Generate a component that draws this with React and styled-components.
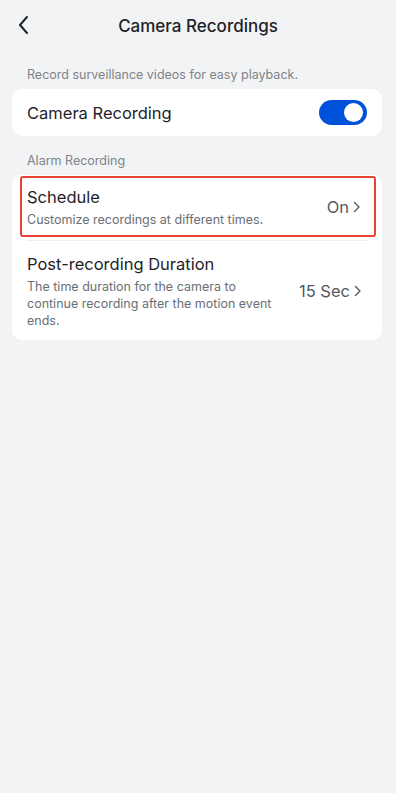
import React, { useState } from 'react'
import styled, { createGlobalStyle } from 'styled-components'

const Global = createGlobalStyle`
  html, body {
    margin: 0;
    padding: 0;
    background: #f2f3f5;
  }
  body {
    font-family: Inter, 'Noto Sans', sans-serif;
    color: #1f2329;
  }
`

const Page = styled.div`
  min-height: 793px;
  background: #f2f3f5;
`

const Header = styled.div`
  position: relative;
  height: 54px;
  display: flex;
  align-items: center;
  justify-content: center;
`

const Back = styled.button`
  position: absolute;
  left: 12px;
  top: 13px;
  width: 24px;
  height: 24px;
  padding: 0;
  border: 0;
  background: none;
  display: flex;
  align-items: center;
  justify-content: center;
`

const Title = styled.h1`
  margin: 0 0 2px;
  font-size: 17px;
  font-weight: 500;
  color: #1f2329;
`

const Content = styled.div`
  padding: 0 14px 0 12px;
`

const SectionLabel = styled.div`
  font-size: 12.5px;
  color: #808389;
  padding: ${p => p.$top || 14}px 15px 7px;
`

const Card = styled.div`
  background: #fff;
  border-radius: 10px;
  overflow: hidden;
`

const Row = styled.div`
  display: flex;
  align-items: center;
  justify-content: space-between;
  padding: ${p => p.$pad || '11px 15px'};
  margin: ${p => p.$outlined ? '1px 6px 0 8px' : '0'};
  border: ${p => p.$outlined ? '2px solid #ea4335' : '0'};
  border-radius: ${p => p.$outlined ? '3px' : '0'};
  gap: 12px;
`

const Texts = styled.div`
  display: flex;
  flex-direction: column;
  gap: 3px;
  max-width: ${p => p.$max || 'none'};
`

const RowTitle = styled.div`
  font-size: 16.5px;
  color: #1f2329;
  line-height: 22px;
`

const Desc = styled.div`
  font-size: 12.5px;
  line-height: 17px;
  color: #6b6e73;
`

const Value = styled.div`
  display: flex;
  align-items: center;
  gap: 4px;
  font-size: 16.5px;
  color: #55585d;
  flex-shrink: 0;
`

const Divider = styled.div`
  height: 1px;
  background: #eeeff1;
  margin: 3px 14px 0 15px;
`

const Track = styled.button`
  width: 48px;
  height: 25px;
  border-radius: 13px;
  border: 0;
  padding: 0;
  background: ${p => p.$on ? '#0051d9' : '#d6d8dc'};
  position: relative;
  cursor: pointer;
`

const Knob = styled.span`
  position: absolute;
  top: 3px;
  left: ${p => p.$on ? '25px' : '3px'};
  width: 19px;
  height: 19px;
  border-radius: 50%;
  background: #fff;
`

const Chevron = () => (
  <svg width="8" height="12" viewBox="0 0 8 12">
    <path d="M1.5 1.5 L6 6 L1.5 10.5" fill="none" stroke="#55585d" strokeWidth="1.4" strokeLinecap="round" strokeLinejoin="round" />
  </svg>
)

export default function App() {
  const [on, setOn] = useState(true)
  return (
    <Page>
      <Global />
      <Header>
        <Back aria-label="Back">
          <svg width="14" height="20" viewBox="0 0 14 20">
            <path d="M10 2 L3 10 L10 18" fill="none" stroke="#1f2329" strokeWidth="2" strokeLinecap="round" strokeLinejoin="round" />
          </svg>
        </Back>
        <Title>Camera Recordings</Title>
      </Header>
      <Content>
        <SectionLabel $top={13}>Record surveillance videos for easy playback.</SectionLabel>
        <Card>
          <Row $pad="11px 15px 11px 15px">
            <RowTitle>Camera Recording</RowTitle>
            <Track $on={on} onClick={() => setOn(!on)}>
              <Knob $on={on} />
            </Track>
          </Row>
        </Card>
        <SectionLabel $top={17}>Alarm Recording</SectionLabel>
        <Card>
          <Row $outlined $pad="8px 13px 7px 5px">
            <Texts>
              <RowTitle>Schedule</RowTitle>
              <Desc>Customize recordings at different times.</Desc>
            </Texts>
            <Value>On <Chevron /></Value>
          </Row>
          <Divider />
          <Row $pad="12px 20px 11px 15px">
            <Texts $max="252px">
              <RowTitle>Post-recording Duration</RowTitle>
              <Desc>The time duration for the camera to continue recording after the motion event ends.</Desc>
            </Texts>
            <Value>15 Sec <Chevron /></Value>
          </Row>
        </Card>
      </Content>
    </Page>
  )
}
